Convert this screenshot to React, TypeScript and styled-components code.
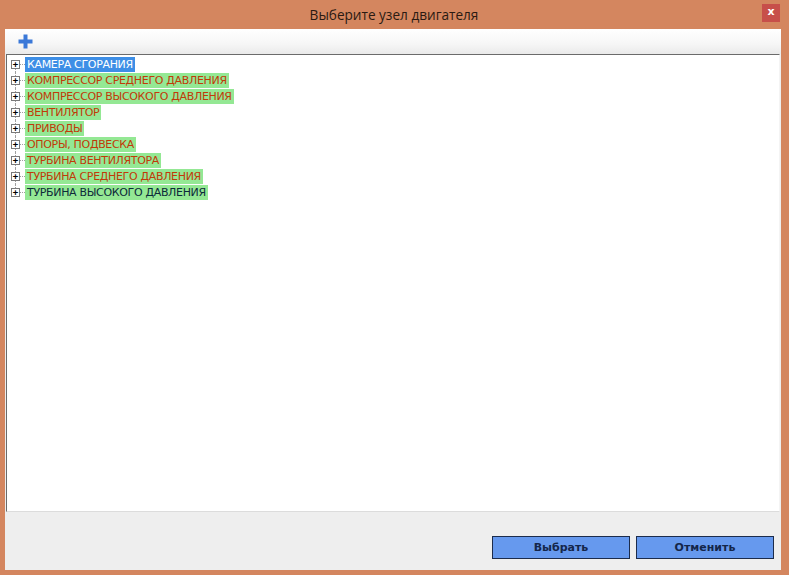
import styled, { createGlobalStyle } from "styled-components";

// ------------------ DATA ------------------
type Tone = "selected" | "normal" | "dark";

interface NodeItem {
  label: string;
  tone: Tone;
}

const nodes: NodeItem[] = [
  { label: "КАМЕРА СГОРАНИЯ", tone: "selected" },
  { label: "КОМПРЕССОР СРЕДНЕГО ДАВЛЕНИЯ", tone: "normal" },
  { label: "КОМПРЕССОР ВЫСОКОГО ДАВЛЕНИЯ", tone: "normal" },
  { label: "ВЕНТИЛЯТОР", tone: "normal" },
  { label: "ПРИВОДЫ", tone: "normal" },
  { label: "ОПОРЫ, ПОДВЕСКА", tone: "normal" },
  { label: "ТУРБИНА ВЕНТИЛЯТОРА", tone: "normal" },
  { label: "ТУРБИНА СРЕДНЕГО ДАВЛЕНИЯ", tone: "normal" },
  { label: "ТУРБИНА ВЫСОКОГО ДАВЛЕНИЯ", tone: "dark" },
];

// ------------------ PAGE ------------------
export default function App() {
  return (
    <>
      <GlobalStyle />
      <Window>
        <TitleBar>
          <Title>Выберите узел двигателя</Title>
          <CloseButton>x</CloseButton>
        </TitleBar>

        <Client>
          <Toolbar>
            <ToolButton>
              <svg width="15" height="15" viewBox="0 0 15 15">
                <rect x="5.5" y="0.5" width="4" height="14" fill="#3a78d8" />
                <rect x="0.5" y="5.5" width="14" height="4" fill="#3a78d8" />
              </svg>
            </ToolButton>
          </Toolbar>

          <TreePanel>
            {nodes.map((n, i) => (
              <TreeRow key={n.label}>
                <Connector $first={i === 0} $last={i === nodes.length - 1} />
                <Expander>+</Expander>
                <Dots />
                <NodeLabel $tone={n.tone}>{n.label}</NodeLabel>
              </TreeRow>
            ))}
          </TreePanel>

          <Footer>
            <ActionButton>Выбрать</ActionButton>
            <ActionButton>Отменить</ActionButton>
          </Footer>
        </Client>
      </Window>
    </>
  );
}

// ------------------ STYLES ------------------
const GlobalStyle = createGlobalStyle`
  html, body {
    margin: 0;
    padding: 0;
    background: #d4865f;
  }
  * {
    box-sizing: border-box;
  }
`;

const Window = styled.div`
  width: 789px;
  height: 575px;
  display: flex;
  flex-direction: column;
  background: #d4865f;
  padding: 0 8px 5px 5px;
`;

const TitleBar = styled.div`
  height: 29px;
  flex: none;
  display: flex;
  align-items: center;
  justify-content: center;
  position: relative;
`;

const Title = styled.div`
  font-family: "Open Sans", "DejaVu Sans", sans-serif;
  font-size: 13.6px;
  color: #2a1a12;
  margin-left: 2px;
  margin-top: -1px;
`;

const CloseButton = styled.div`
  position: absolute;
  right: 1px;
  top: 4px;
  width: 18px;
  height: 18px;
  background: #c74f4a;
  color: #ffffff;
  font-family: "DejaVu Sans", sans-serif;
  font-weight: bold;
  font-size: 11px;
  line-height: 16px;
  text-align: center;
`;

const Client = styled.div`
  flex: 1;
  display: flex;
  flex-direction: column;
  background: #eeeeee;
`;

const Toolbar = styled.div`
  height: 25px;
  flex: none;
  display: flex;
  align-items: center;
  padding-left: 13px;
  background: linear-gradient(#ffffff, #f6f6f6 60%, #eaeaea);
`;

const ToolButton = styled.div`
  width: 15px;
  height: 15px;
  display: flex;
`;

const TreePanel = styled.div`
  flex: 1;
  background: #ffffff;
  margin: 0 1px 0 1px;
  border-style: solid;
  border-width: 1px;
  border-color: #6b6b6b #f4f4f4 #dcdcdc #6b6b6b;
  padding-top: 1px;
`;

const TreeRow = styled.div`
  height: 16px;
  display: flex;
  align-items: center;
  position: relative;
  padding-left: 4px;
`;

const Connector = styled.div<{ $first: boolean; $last: boolean }>`
  position: absolute;
  left: 8px;
  top: ${(p) => (p.$first ? "8px" : "0")};
  bottom: ${(p) => (p.$last ? "8px" : "0")};
  border-left: 1px dotted #a0a0a0;
`;

const Expander = styled.div`
  position: relative;
  width: 9px;
  height: 9px;
  border: 1px solid #7a7a7a;
  background: #ffffff;
  color: #000000;
  font-family: "DejaVu Sans Mono", monospace;
  font-size: 9px;
  line-height: 7px;
  text-align: center;
  font-weight: bold;
`;

const Dots = styled.div`
  width: 5px;
  border-top: 1px dotted #a0a0a0;
`;

const toneBg: Record<Tone, string> = {
  selected: "#3d8ee6",
  normal: "#94e894",
  dark: "#94e894",
};

const toneFg: Record<Tone, string> = {
  selected: "#ffffff",
  normal: "#c13a08",
  dark: "#0d2a3a",
};

const NodeLabel = styled.div<{ $tone: Tone }>`
  height: 15px;
  padding: 0 2px 0 2px;
  background: ${(p) => toneBg[p.$tone]};
  color: ${(p) => toneFg[p.$tone]};
  font-family: "DejaVu Sans", sans-serif;
  font-size: 11px;
  line-height: 15px;
  letter-spacing: -0.33px;
  white-space: nowrap;
`;

const Footer = styled.div`
  height: 58px;
  flex: none;
  display: flex;
  justify-content: flex-end;
  align-items: flex-start;
  gap: 6px;
  padding: 24px 7px 0 0;
`;

const ActionButton = styled.button`
  width: 138px;
  height: 23px;
  background: #6699ee;
  border: 1px solid #1c2c4c;
  color: #14264a;
  font-family: "DejaVu Sans", sans-serif;
  font-size: 11px;
  font-weight: bold;
  padding: 0;
`;
